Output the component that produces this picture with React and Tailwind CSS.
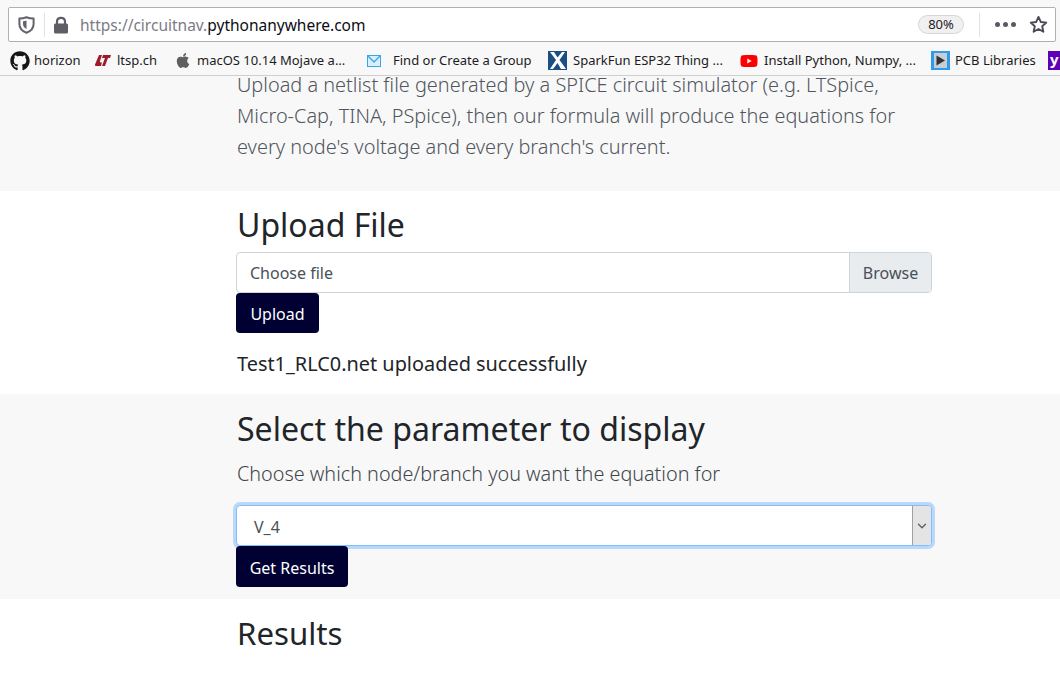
import { ChevronDown } from 'lucide-react';
import { FaGithub, FaApple, FaYoutube } from 'react-icons/fa';

function Bookmark({ icon, label, gap = 'gap-[6px]', width }) {
  return (
    <div className={`flex items-center ${gap} shrink-0 ${width}`}>
      {icon}
      <span className="text-[13px] text-[#1c1b22] whitespace-nowrap">{label}</span>
    </div>
  );
}

function Toolbar() {
  return (
    <div className="bg-[#f8f8f9] h-[76px] border-b border-[#cfcfcf] flex flex-col pt-[7px]">
      {/* URL bar */}
      <div className="mx-[8px] w-[1048px] h-[35px] bg-white border border-[#b0b0b0] rounded-[2px] flex items-center">
        <svg className="ml-[9px] w-[17px] h-[18px]" viewBox="0 0 17 18" fill="none">
          <path d="M8.5 1.2 C10.5 2 13 2.5 15.6 2.6 V8 C15.6 12 12.6 15.2 8.5 16.8 C4.4 15.2 1.4 12 1.4 8 V2.6 C4 2.5 6.5 2 8.5 1.2 Z" stroke="#63636b" strokeWidth="2" strokeLinejoin="round" />
          <path d="M5 5.2 C6.2 5.1 7.4 4.8 8.5 4.4 V13 C6.4 12 5 10.2 5 8 Z" fill="#63636b" />
        </svg>
        <div className="ml-[9px] w-px h-[24px] bg-[#e2e2e2]" />
        <svg className="ml-[8px] w-[16px] h-[18px]" viewBox="0 0 16 18" fill="none">
          <path d="M4 8 V5.5 C4 3.2 5.7 1.8 8 1.8 C10.3 1.8 12 3.2 12 5.5 V8" stroke="#5e5e66" strokeWidth="2.2" />
          <rect x="1" y="7.5" width="14" height="10" rx="1.5" fill="#5e5e66" />
        </svg>
        <div className="ml-[11px] mt-[2px] text-[15.5px] leading-none">
          <span className="text-[#7b7b85]">https://circuitnav.</span>
          <span className="text-[#0c0c14]">pythonanywhere.com</span>
        </div>
        <div className="ml-auto w-[46px] h-[19px] rounded-full bg-[#f0f0f0] border border-[#d6d6d6] text-[13px] leading-none text-[#1c1b22] flex items-center justify-center">
          80%
        </div>
        <div className="ml-[15px] w-px h-[24px] bg-[#e2e2e2]" />
        <div className="ml-[15px] flex gap-[3px]">
          <div className="w-[5px] h-[5px] rounded-full bg-[#5b5b66]" />
          <div className="w-[5px] h-[5px] rounded-full bg-[#5b5b66]" />
          <div className="w-[5px] h-[5px] rounded-full bg-[#5b5b66]" />
        </div>
        <svg className="ml-[13px] mr-[7px] w-[19px] h-[19px]" viewBox="0 0 20 20" fill="none">
          <path d="M10 2 L12.4 7.3 L18.2 8 L13.9 11.9 L15.1 17.6 L10 14.7 L4.9 17.6 L6.1 11.9 L1.8 8 L7.6 7.3 Z" stroke="#4a4a52" strokeWidth="2" strokeLinejoin="round" />
        </svg>
      </div>
      {/* Bookmarks */}
      <div className="h-[33px] pt-[4px] flex items-center pl-[10px] overflow-hidden">
        <Bookmark width="w-[85px]" gap="gap-[4px]" icon={<FaGithub className="w-[20px] h-[20px] text-[#161614]" />} label="horizon" />
        <Bookmark width="w-[80px]" gap="gap-[6px]" icon={
          <svg className="w-[16px] h-[11px]" viewBox="0 0 16 11">
            <path d="M4 0 H7 L5 6 C4.8 7 5.2 7.6 6 7.6 H7 L6 11 H1 C0.2 11 -0.2 10.4 0 9.6 Z M8 0 H16 L15 3 H13 L10 11 H7 L10 3 H7 Z" fill="#a01a28" />
          </svg>
        } label="ltsp.ch" />
        <Bookmark width="w-[192px]" gap="gap-[6px]" icon={<FaApple className="w-[16px] h-[17px] text-[#5f5f5f]" />} label="macOS 10.14 Mojave a..." />
        <Bookmark width="w-[181px]" gap="gap-[12px]" icon={
          <svg className="w-[14px] h-[12px]" viewBox="0 0 14 12" fill="none">
            <rect x="0.5" y="0.5" width="13" height="11" fill="#d8f0fd" stroke="#3aa6ea" />
            <path d="M0.5 0.5 L7 7 L13.5 0.5" stroke="#3aa6ea" strokeWidth="1.4" />
          </svg>
        } label="Find or Create a Group" />
        <Bookmark width="w-[192px]" gap="gap-[6px]" icon={
          <svg className="w-[19px] h-[19px]" viewBox="0 0 19 19">
            <rect width="19" height="19" fill="#1b4f83" />
            <path d="M2 1 L8 9 L2 18 H5 L9.5 12 L13 18 H18 L11.5 9 L17 1 H14 L9.5 6.5 L6 1 Z" fill="#ffffff" />
          </svg>
        } label="SparkFun ESP32 Thing ..." />
        <Bookmark width="w-[191px]" gap="gap-[6px]" icon={<FaYoutube className="w-[18px] h-[18px] text-[#ff0000]" />} label="Install Python, Numpy, ..." />
        <Bookmark width="w-[117px]" gap="gap-[5px]" icon={
          <svg className="w-[19px] h-[19px]" viewBox="0 0 19 19">
            <rect width="19" height="19" fill="#2d9bf0" />
            <rect x="3" y="2" width="13" height="15" fill="#c9ced3" />
            <path d="M5.5 4.5 L14 9.5 L5.5 14.5 Z" fill="#333333" />
          </svg>
        } label="PCB Libraries" />
        <div className="w-[14px] h-[19px] bg-[#5f01b4] text-white text-[15px] font-bold leading-[17px] pl-[2px] shrink-0">y</div>
      </div>
    </div>
  );
}

export default function App() {
  return (
    <div className="w-[1060px] h-[681px] overflow-hidden bg-white font-['Noto_Sans','Open_Sans',sans-serif]">
      <Toolbar />

      {/* Intro */}
      <div className="bg-[#f8f8f9] h-[115px] overflow-hidden pl-[237px]">
        <p className="-mt-[7px] w-[690px] text-[19.9px] leading-[31px] font-light text-[#50565c]">
          Upload a netlist file generated by a SPICE circuit simulator (e.g. LTSpice, Micro-Cap, TINA, PSpice), then our formula will produce the equations for every node's voltage and every branch's current.
        </p>
      </div>

      {/* Upload */}
      <div className="h-[203px] pl-[236px]">
        <div className="w-[696px]">
          <h2 className="pt-[13px] pl-px text-[32px] leading-[42px] text-[#212529]">Upload File</h2>
          <div className="mt-[6px] h-[41px] flex border border-[#ced4da] rounded-[4px] overflow-hidden bg-white">
            <div className="flex-1 pl-[13px] text-[16px] leading-[40px] text-[#495057]">Choose file</div>
            <div className="w-[82px] bg-[#e9ecef] border-l border-[#ced4da] text-center text-[16px] leading-[40px] text-[#495057]">Browse</div>
          </div>
          <div className="w-[83px] h-[40px] overflow-hidden bg-[#000033] rounded-[4px] text-white text-[16px] leading-[42px] text-center">Upload</div>
          <p className="mt-[15px] pl-px text-[19.9px] leading-[32px] text-[#212529]">Test1_RLC0.net uploaded successfully</p>
        </div>
      </div>

      {/* Select */}
      <div className="bg-[#f8f8f9] h-[205px] pl-[236px]">
        <div className="w-[696px]">
          <h2 className="pt-[14px] pl-px text-[32.1px] leading-[42px] text-[#212529]">Select the parameter to display</h2>
          <p className="mt-[9px] pl-px text-[19.8px] leading-[30px] font-light text-[#40464c]">Choose which node/branch you want the equation for</p>
          <div className="mt-[16px] h-[41px] flex items-stretch bg-white border border-[#80bdff] rounded-[4px] shadow-[0_0_0_3px_rgba(0,123,255,0.25)] overflow-hidden">
            <div className="flex-1 pl-[17px] text-[16px] leading-[42px] text-[#495057]">V_4</div>
            <div className="w-[19px] bg-[#e4e4e4] border-l border-[#a0a0a0] flex items-center justify-center">
              <ChevronDown className="w-[14px] h-[14px] text-[#666666]" strokeWidth={2.5} />
            </div>
          </div>
          <div className="w-[112px] h-[41px] overflow-hidden bg-[#000033] rounded-[4px] text-white text-[16px] leading-[44px] text-center">Get Results</div>
        </div>
      </div>

      {/* Results */}
      <div className="pl-[237px]">
        <h2 className="pt-[13px] text-[31.2px] leading-[42px] text-[#212529]">Results</h2>
      </div>
    </div>
  );
}
